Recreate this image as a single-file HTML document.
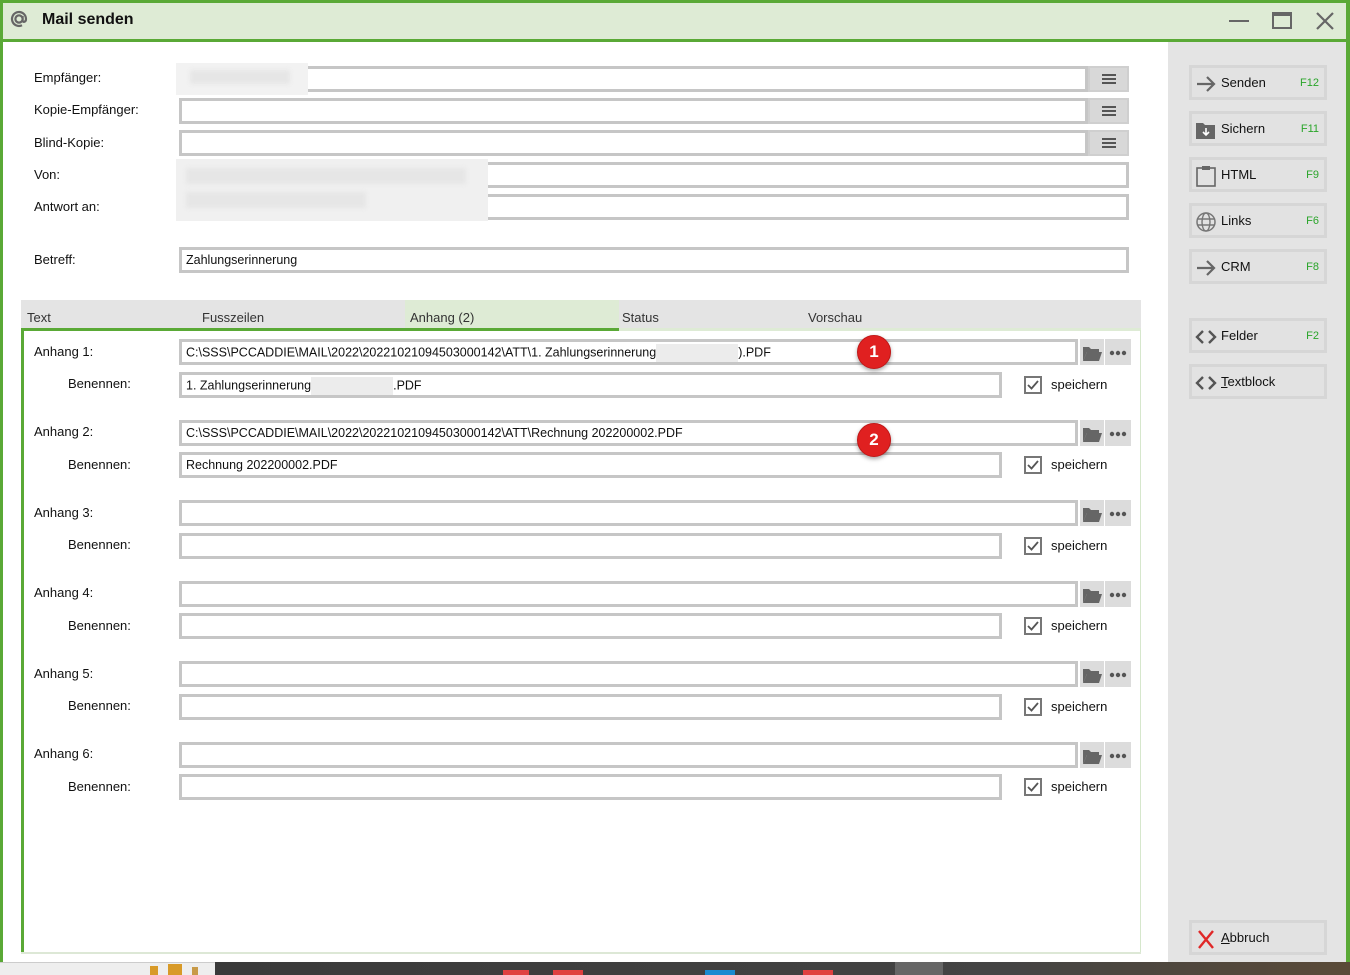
<!DOCTYPE html>
<html><head><meta charset="utf-8">
<style>
*{box-sizing:border-box;margin:0;padding:0}
body{width:1350px;height:975px;position:relative;overflow:hidden;background:#fff;font-family:"Liberation Sans",sans-serif;font-size:13px;color:#111}
.a{position:absolute}
.inp{position:absolute;border:3px solid #c6c6c6;background:#fff;height:26px;padding:2px 4px;font-size:12.5px;white-space:nowrap;overflow:hidden;line-height:16px}
.lbl{position:absolute;font-size:13px}
.mb{position:absolute;width:41px;height:26px;background:#d8d8d8;border:2px solid #cfcfcf}
.mb i{position:absolute;left:12px;width:14px;height:2px;background:#555}
.fb{position:absolute;width:24px;height:26px;background:#dcdcdc}
.db{position:absolute;width:26px;height:26px;background:#dcdcdc}
.cb{position:absolute;width:18px;height:18px;border:2px solid #777;background:#fff}
.rb{position:absolute;left:1189px;width:138px;height:35px;background:#e2e2e2;border:3px solid #d6d6d6}
.rb .t{position:absolute;left:29px;top:7px;font-size:13px}
.rb .k{position:absolute;right:5px;top:9px;font-size:11px;color:#2aa52a}
.rb svg{position:absolute;left:3px;top:5px}
.blur{position:absolute;background:#e6e6e6;filter:blur(2px)}
.circ{position:absolute;width:34px;height:34px;border-radius:50%;background:#e02020;box-shadow:0 2px 4px rgba(0,0,0,.35);border:1px solid #c01818;color:#fff;font-weight:bold;font-size:17px;text-align:center;line-height:32px}
</style></head><body>
<div class="a" style="left:0;top:0;width:1350px;height:962px;background:#5aa936"></div>
<div class="a" style="left:3px;top:3px;width:1343px;height:36px;background:#deebd5"></div>
<div class="a" style="left:3px;top:42px;width:1165px;height:920px;background:#fff"></div>
<div class="a" style="left:1168px;top:42px;width:178px;height:920px;background:#e4e4e4"></div>
<svg class="a" style="left:9px;top:9px" width="20" height="20"><circle cx="10" cy="10" r="3.6" fill="none" stroke="#666" stroke-width="2.2"/><path d="M13.6 7v4.5c0 2 3.4 2 3.4-1.5A7 7 0 1 0 13 16.3" fill="none" stroke="#666" stroke-width="2.2"/></svg>
<div class="a" style="left:42px;top:11px;font-size:16px;font-weight:bold;color:#111">Mail senden</div>
<div class="a" style="left:1229px;top:20px;width:20px;height:2px;background:#666"></div>
<div class="a" style="left:1272px;top:12px;width:20px;height:17px;border:2px solid #666;border-top-width:4px"></div>
<svg class="a" style="left:1316px;top:12px" width="18" height="18"><path d="M1 1L17 17M17 1L1 17" stroke="#666" stroke-width="2.2"/></svg>

<div class="lbl" style="left:34px;top:70px">Empfänger:</div>
<div class="lbl" style="left:34px;top:102px">Kopie-Empfänger:</div>
<div class="lbl" style="left:34px;top:135px">Blind-Kopie:</div>
<div class="lbl" style="left:34px;top:167px">Von:</div>
<div class="lbl" style="left:34px;top:199px">Antwort an:</div>
<div class="lbl" style="left:34px;top:252px">Betreff:</div>
<div class="inp" style="left:179px;top:66px;width:909px"></div>
<div class="inp" style="left:179px;top:98px;width:909px"></div>
<div class="inp" style="left:179px;top:130px;width:909px"></div>
<div class="mb" style="left:1088px;top:66px"><i style="top:6px"></i><i style="top:10px"></i><i style="top:14px"></i></div>
<div class="mb" style="left:1088px;top:98px"><i style="top:6px"></i><i style="top:10px"></i><i style="top:14px"></i></div>
<div class="mb" style="left:1088px;top:130px"><i style="top:6px"></i><i style="top:10px"></i><i style="top:14px"></i></div>
<div class="inp" style="left:179px;top:162px;width:950px"></div>
<div class="inp" style="left:179px;top:194px;width:950px"></div>
<div class="inp" style="left:179px;top:247px;width:950px">Zahlungserinnerung</div>
<div class="a" style="left:176px;top:63px;width:132px;height:32px;background:#f2f2f2"></div>
<div class="blur" style="left:190px;top:70px;width:100px;height:14px"></div>
<div class="a" style="left:176px;top:159px;width:312px;height:62px;background:#f0f0f0"></div>
<div class="blur" style="left:186px;top:168px;width:280px;height:16px"></div>
<div class="blur" style="left:186px;top:192px;width:180px;height:16px"></div>

<div class="a" style="left:21px;top:300px;width:1120px;height:30px;background:#e4e4e4"></div>
<div class="a" style="left:405px;top:300px;width:214px;height:30px;background:#deebd5"></div>
<div class="a" style="left:619px;top:328px;width:522px;height:3px;background:#deebd5"></div>
<div class="a" style="left:21px;top:328px;width:598px;height:3px;background:#5aa936"></div>
<div class="lbl" style="left:27px;top:310px;color:#333">Text</div>
<div class="lbl" style="left:202px;top:310px;color:#333">Fusszeilen</div>
<div class="lbl" style="left:410px;top:310px;color:#333">Anhang (2)</div>
<div class="lbl" style="left:622px;top:310px;color:#333">Status</div>
<div class="lbl" style="left:808px;top:310px;color:#333">Vorschau</div>
<div class="a" style="left:21px;top:330px;width:3px;height:623px;background:#5aa936"></div>
<div class="a" style="left:1140px;top:330px;width:1px;height:623px;background:#d6e7cc"></div>
<div class="a" style="left:21px;top:952px;width:1120px;height:2px;background:#dde8d6"></div>

<div class="lbl" style="left:34px;top:344px">Anhang 1:</div>
<div class="lbl" style="left:34px;top:424px">Anhang 2:</div>
<div class="lbl" style="left:34px;top:505px">Anhang 3:</div>
<div class="lbl" style="left:34px;top:585px">Anhang 4:</div>
<div class="lbl" style="left:34px;top:666px">Anhang 5:</div>
<div class="lbl" style="left:34px;top:746px">Anhang 6:</div>
<div class="lbl" style="left:68px;top:376px">Benennen:</div>
<div class="lbl" style="left:68px;top:457px">Benennen:</div>
<div class="lbl" style="left:68px;top:537px">Benennen:</div>
<div class="lbl" style="left:68px;top:618px">Benennen:</div>
<div class="lbl" style="left:68px;top:698px">Benennen:</div>
<div class="lbl" style="left:68px;top:779px">Benennen:</div>

<div class="inp" style="left:179px;top:339px;width:899px">C:\SSS\PCCADDIE\MAIL\2022\20221021094503000142\ATT\1. Zahlungserinnerung<span style="display:inline-block;width:82px;height:18px;background:#ececec;vertical-align:middle"></span>).PDF</div>
<div class="inp" style="left:179px;top:420px;width:899px">C:\SSS\PCCADDIE\MAIL\2022\20221021094503000142\ATT\Rechnung 202200002.PDF</div>
<div class="inp" style="left:179px;top:500px;width:899px"></div>
<div class="inp" style="left:179px;top:581px;width:899px"></div>
<div class="inp" style="left:179px;top:661px;width:899px"></div>
<div class="inp" style="left:179px;top:742px;width:899px"></div>

<div class="inp" style="left:179px;top:372px;width:823px">1. Zahlungserinnerung<span style="display:inline-block;width:82px;height:18px;background:#ececec;vertical-align:middle"></span>.PDF</div>
<div class="inp" style="left:179px;top:452px;width:823px">Rechnung 202200002.PDF</div>
<div class="inp" style="left:179px;top:533px;width:823px"></div>
<div class="inp" style="left:179px;top:613px;width:823px"></div>
<div class="inp" style="left:179px;top:694px;width:823px"></div>
<div class="inp" style="left:179px;top:774px;width:823px"></div>

<div class="fb" style="left:1080px;top:339px"><svg width="24" height="26"><path d="M3 8h6l2 2h8v3H7l-4 9z" fill="#666"/><path d="M7 13h15l-3 9H3z" fill="#666"/></svg></div>
<div class="db" style="left:1105px;top:339px"><svg width="26" height="26"><circle cx="7" cy="14" r="2.2" fill="#555"/><circle cx="13" cy="14" r="2.2" fill="#555"/><circle cx="19" cy="14" r="2.2" fill="#555"/></svg></div>
<div class="fb" style="left:1080px;top:420px"><svg width="24" height="26"><path d="M3 8h6l2 2h8v3H7l-4 9z" fill="#666"/><path d="M7 13h15l-3 9H3z" fill="#666"/></svg></div>
<div class="db" style="left:1105px;top:420px"><svg width="26" height="26"><circle cx="7" cy="14" r="2.2" fill="#555"/><circle cx="13" cy="14" r="2.2" fill="#555"/><circle cx="19" cy="14" r="2.2" fill="#555"/></svg></div>
<div class="fb" style="left:1080px;top:500px"><svg width="24" height="26"><path d="M3 8h6l2 2h8v3H7l-4 9z" fill="#666"/><path d="M7 13h15l-3 9H3z" fill="#666"/></svg></div>
<div class="db" style="left:1105px;top:500px"><svg width="26" height="26"><circle cx="7" cy="14" r="2.2" fill="#555"/><circle cx="13" cy="14" r="2.2" fill="#555"/><circle cx="19" cy="14" r="2.2" fill="#555"/></svg></div>
<div class="fb" style="left:1080px;top:581px"><svg width="24" height="26"><path d="M3 8h6l2 2h8v3H7l-4 9z" fill="#666"/><path d="M7 13h15l-3 9H3z" fill="#666"/></svg></div>
<div class="db" style="left:1105px;top:581px"><svg width="26" height="26"><circle cx="7" cy="14" r="2.2" fill="#555"/><circle cx="13" cy="14" r="2.2" fill="#555"/><circle cx="19" cy="14" r="2.2" fill="#555"/></svg></div>
<div class="fb" style="left:1080px;top:661px"><svg width="24" height="26"><path d="M3 8h6l2 2h8v3H7l-4 9z" fill="#666"/><path d="M7 13h15l-3 9H3z" fill="#666"/></svg></div>
<div class="db" style="left:1105px;top:661px"><svg width="26" height="26"><circle cx="7" cy="14" r="2.2" fill="#555"/><circle cx="13" cy="14" r="2.2" fill="#555"/><circle cx="19" cy="14" r="2.2" fill="#555"/></svg></div>
<div class="fb" style="left:1080px;top:742px"><svg width="24" height="26"><path d="M3 8h6l2 2h8v3H7l-4 9z" fill="#666"/><path d="M7 13h15l-3 9H3z" fill="#666"/></svg></div>
<div class="db" style="left:1105px;top:742px"><svg width="26" height="26"><circle cx="7" cy="14" r="2.2" fill="#555"/><circle cx="13" cy="14" r="2.2" fill="#555"/><circle cx="19" cy="14" r="2.2" fill="#555"/></svg></div>

<div class="cb" style="left:1024px;top:376px"><svg width="14" height="14"><path d="M2 7l3.5 3.5L12 3" stroke="#555" stroke-width="1.8" fill="none"/></svg></div>
<div class="cb" style="left:1024px;top:456px"><svg width="14" height="14"><path d="M2 7l3.5 3.5L12 3" stroke="#555" stroke-width="1.8" fill="none"/></svg></div>
<div class="cb" style="left:1024px;top:537px"><svg width="14" height="14"><path d="M2 7l3.5 3.5L12 3" stroke="#555" stroke-width="1.8" fill="none"/></svg></div>
<div class="cb" style="left:1024px;top:617px"><svg width="14" height="14"><path d="M2 7l3.5 3.5L12 3" stroke="#555" stroke-width="1.8" fill="none"/></svg></div>
<div class="cb" style="left:1024px;top:698px"><svg width="14" height="14"><path d="M2 7l3.5 3.5L12 3" stroke="#555" stroke-width="1.8" fill="none"/></svg></div>
<div class="cb" style="left:1024px;top:778px"><svg width="14" height="14"><path d="M2 7l3.5 3.5L12 3" stroke="#555" stroke-width="1.8" fill="none"/></svg></div>
<div class="lbl" style="left:1051px;top:377px">speichern</div>
<div class="lbl" style="left:1051px;top:457px">speichern</div>
<div class="lbl" style="left:1051px;top:538px">speichern</div>
<div class="lbl" style="left:1051px;top:618px">speichern</div>
<div class="lbl" style="left:1051px;top:699px">speichern</div>
<div class="lbl" style="left:1051px;top:779px">speichern</div>

<div class="circ" style="left:857px;top:335px">1</div>
<div class="circ" style="left:857px;top:423px">2</div>

<div class="rb" style="top:65px"><svg width="22" height="22"><path d="M2 11h17M12 4l7 7-7 7" stroke="#666" stroke-width="2.2" fill="none"/></svg><span class="t">Senden</span><span class="k">F12</span></div>
<div class="rb" style="top:111px"><svg width="22" height="22"><path d="M1 4h7l2 2h10v14H1z" fill="#666"/><path d="M11 9v7M8 13l3 3 3-3" stroke="#fff" stroke-width="1.6" fill="none"/></svg><span class="t">Sichern</span><span class="k">F11</span></div>
<div class="rb" style="top:157px"><svg width="22" height="22"><rect x="2" y="3" width="18" height="18" fill="none" stroke="#666" stroke-width="1.6"/><rect x="7" y="1" width="8" height="4" fill="#666"/></svg><span class="t">HTML</span><span class="k">F9</span></div>
<div class="rb" style="top:203px"><svg width="22" height="22"><circle cx="11" cy="11" r="9" fill="none" stroke="#777" stroke-width="1.5"/><ellipse cx="11" cy="11" rx="4" ry="9" fill="none" stroke="#777" stroke-width="1.4"/><path d="M2 8h18M2 14h18" stroke="#777" stroke-width="1.4"/></svg><span class="t">Links</span><span class="k">F6</span></div>
<div class="rb" style="top:249px"><svg width="22" height="22"><path d="M2 11h17M12 4l7 7-7 7" stroke="#666" stroke-width="2.2" fill="none"/></svg><span class="t">CRM</span><span class="k">F8</span></div>
<div class="rb" style="top:318px"><svg width="22" height="22"><path d="M8 5l-6 6 6 6M14 5l6 6-6 6" stroke="#555" stroke-width="2.4" fill="none"/></svg><span class="t">Felder</span><span class="k">F2</span></div>
<div class="rb" style="top:364px"><svg width="22" height="22"><path d="M8 5l-6 6 6 6M14 5l6 6-6 6" stroke="#555" stroke-width="2.4" fill="none"/></svg><span class="t"><u>T</u>extblock</span></div>
<div class="rb" style="top:920px"><svg width="22" height="22"><path d="M4 3l14 17M18 3L4 20" stroke="#e02828" stroke-width="2.4"/></svg><span class="t"><u>A</u>bbruch</span></div>

<div class="a" style="left:0;top:962px;width:215px;height:13px;background:#eeeeee;border-top:1px solid #ccc"></div>
<div class="a" style="left:215px;top:962px;width:1135px;height:13px;background:linear-gradient(90deg,#3a3a3a,#444 70%,#5a4a38)"></div>
<div class="a" style="left:150px;top:966px;width:8px;height:9px;background:#d89a28"></div>
<div class="a" style="left:168px;top:964px;width:14px;height:11px;background:#d89a28"></div>
<div class="a" style="left:192px;top:967px;width:6px;height:8px;background:#c89a48"></div>
<div class="a" style="left:503px;top:970px;width:26px;height:5px;background:#e04040"></div>
<div class="a" style="left:553px;top:970px;width:30px;height:5px;background:#e04040"></div>
<div class="a" style="left:705px;top:970px;width:30px;height:5px;background:#1a8ad0"></div>
<div class="a" style="left:803px;top:970px;width:30px;height:5px;background:#e04040"></div>
<div class="a" style="left:895px;top:962px;width:48px;height:13px;background:#666"></div>
</body></html>
